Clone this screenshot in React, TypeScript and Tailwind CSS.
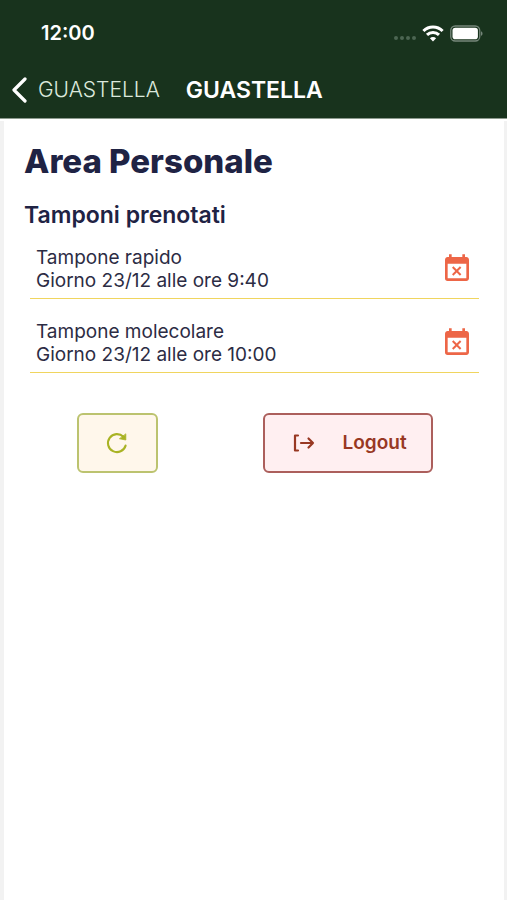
import { MdEventBusy } from "react-icons/md";

type Booking = { id: number; name: string; when: string };

const bookings: Booking[] = [
  { id: 1, name: "Tampone rapido", when: "Giorno 23/12 alle ore 9:40" },
  { id: 2, name: "Tampone molecolare", when: "Giorno 23/12 alle ore 10:00" },
];

function WifiIcon() {
  return (
    <svg width="22" height="17" viewBox="0 0 22 17" fill="none" stroke="white" strokeWidth="3" aria-hidden="true">
      <path d="M1.4 6a13.6 13.6 0 0 1 19.2 0" />
      <path d="M5 9.900a8.500 8.500 0 0 1 12 0" />
      <path d="M11 16.4l-3.100-3.100a4.400 4.400 0 0 1 6.200 0z" fill="white" stroke="none" />
    </svg>
  );
}

function BatteryIcon() {
  return (
    <svg width="33" height="17" viewBox="0 0 33 17" aria-hidden="true">
      <rect x="0.75" y="1" width="29" height="15" rx="4.5" fill="none" stroke="#75877a" strokeWidth="1.3" />
      <rect x="2.5" y="2.8" width="25.4" height="11.4" rx="2.8" fill="white" />
      <path d="M31 6.2c2 .8 2 3.800 0 4.600z" fill="#75877a" />
    </svg>
  );
}

function ReloadIcon() {
  return (
    <svg width="24" height="24" viewBox="0 0 24 24" fill="none" stroke="currentColor" strokeWidth="2.1" strokeLinecap="round" aria-hidden="true">
      <path d="M20.600 14.600A9 9 0 1 1 18.400 5.800" />
      <path d="M20.800 3.200v5.800l-6-1.200z" fill="currentColor" strokeWidth="0.800" strokeLinejoin="round" />
    </svg>
  );
}

function StatusBar() {
  return (
    <div className="flex h-[62px] items-center justify-between pt-1 pr-6 pl-[41px]">
      <span className="text-[20px] leading-6 font-semibold">12:00</span>
      <div className="flex items-center gap-1.5">
        <div className="flex gap-0.5 pt-2.5">
          {[0, 1, 2, 3].map((dot) => (
            <span key={dot} className="size-1 rounded-full bg-[#4c6652]" />
          ))}
        </div>
        <WifiIcon />
        <BatteryIcon />
      </div>
    </div>
  );
}

function NavBar() {
  return (
    <nav className="flex h-14 items-center gap-[26px] pl-3">
      <a href="#" className="flex items-center gap-[11px] text-[21px] leading-7 font-light text-[#dbe8dc]">
        <svg width="15" height="26" viewBox="0 0 15 26" fill="none" stroke="white" strokeWidth="3.2" strokeLinecap="round" strokeLinejoin="round" aria-hidden="true">
          <path d="M13 2L2 13l11 11" />
        </svg>
        GUASTELLA
      </a>
      <span className="text-[23px] leading-7 font-semibold">GUASTELLA</span>
    </nav>
  );
}

function BookingRow({ booking }: { booking: Booking }) {
  return (
    <li className="flex items-center justify-between border-b-1 border-b-[#f0d55f] px-1.5 pb-1.5">
      <p className="text-[19px] leading-[23px] text-[#2c2c44]">
        {booking.name}
        <br />
        {booking.when}
      </p>
      <button type="button" aria-label={`Annulla ${booking.name}`} className="text-[#ed6647]">
        <MdEventBusy size={32} />
      </button>
    </li>
  );
}

export default function App() {
  return (
    <div className="flex min-h-screen flex-col bg-white font-['Inter','Liberation_Sans',sans-serif]">
      <header className="border-b border-[#8d9a8e] bg-[#18331d] text-white">
        <StatusBar />
        <NavBar />
      </header>
      <main className="mt-0.5 flex-1 border-r-[3px] border-l-4 border-[#f2f2f2] pt-5 pr-[19px] pl-5">
        <h1 className="text-[33px] leading-10 font-extrabold text-[#1f2344]">Area Personale</h1>
        <h2 className="mt-5 text-[23px] leading-7 font-semibold text-[#1f2344]">Tamponi prenotati</h2>
        <ul className="mt-[17px] flex flex-col gap-[21px] px-1.5">
          {bookings.map((booking) => (
            <BookingRow key={booking.id} booking={booking} />
          ))}
        </ul>
        <div className="mt-10 flex justify-around">
          <button
            type="button"
            aria-label="Aggiorna"
            className="flex h-[60px] w-[81px] items-center justify-center rounded-md border-2 border-[#bcc36f] bg-[#fff7eb] text-[#a9b324]"
          >
            <ReloadIcon />
          </button>
          <button
            type="button"
            className="flex h-[60px] w-[170px] items-center gap-7 rounded-md border-2 border-[#ac5f5c] bg-[#ffeff1] pl-7 text-[19px] font-semibold text-[#983823]"
          >
            <svg width="22" height="18" viewBox="0 0 22 18" fill="none" stroke="currentColor" strokeWidth="2.2" strokeLinecap="round" strokeLinejoin="round" aria-hidden="true">
              <path d="M5 1.500H2v15h3" />
              <path d="M8 9h12M15.500 4.500L20 9l-4.500 4.500" />
            </svg>
            Logout
          </button>
        </div>
      </main>
    </div>
  );
}
